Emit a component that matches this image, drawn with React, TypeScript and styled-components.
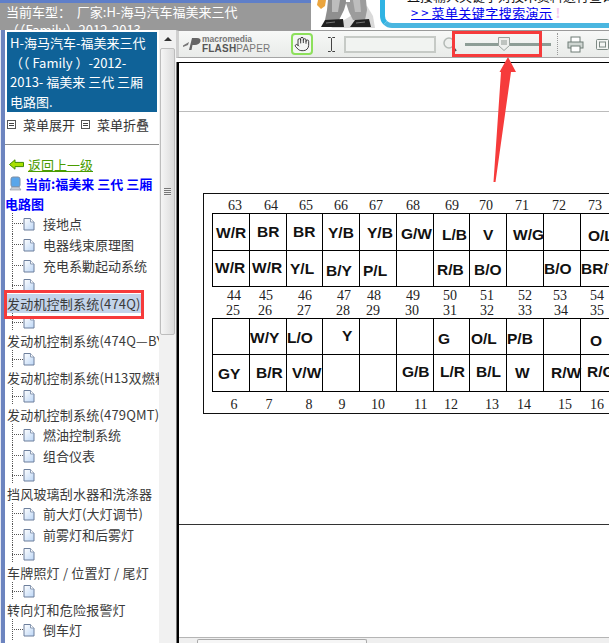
import React from 'react';
import styled, { createGlobalStyle } from 'styled-components';
import { Hand } from 'lucide-react';

const GlobalStyle = createGlobalStyle`
  html, body {
    margin: 0;
    padding: 0;
    background: #fff;
  }
  #root {
    width: 609px;
    height: 643px;
    overflow: hidden;
  }
`;

const cjk = `"Noto Sans CJK SC", "Noto Sans", sans-serif`;

const Page = styled.div`
  position: relative;
  width: 609px;
  height: 643px;
  overflow: hidden;
  display: flex;
  flex-direction: column;
  font-family: ${cjk};
  font-size: 13px;
`;

/* top strip */
const TopBar = styled.div`
  flex: 0 0 30px;
  display: flex;
  overflow: hidden;
`;

const CarTitle = styled.div`
  flex: 0 0 311px;
  box-sizing: border-box;
  padding: 3px 0 0 6px;
  background: linear-gradient(to bottom, #5f7fc9 0 3px, #999 3px);
  color: #fff;
  line-height: 18px;
  white-space: pre;
  overflow: hidden;
`;

const Mascot = styled.svg`
  flex: 0 0 69px;
  height: 30px;
  background: #fff;
`;

const Banner = styled.div`
  flex: 1;
  height: 28px;
  box-sizing: border-box;
  border: 5px solid #2fb3e3;
  border-top: 0;
  border-right: 0;
  border-bottom-color: #4ab6e0;
  border-bottom-left-radius: 12px;
  background: #fff;
  padding-left: 26px;
  overflow: hidden;
  white-space: nowrap;
`;

const BannerClip = styled.div`
  height: 3px;
  margin-left: -4px;
  overflow: hidden;
  font-size: 13px;
  color: #111;
  span {
    display: block;
    margin-top: -10px;
    line-height: 12px;
  }
`;

const BannerLink = styled.a`
  display: inline-block;
  line-height: 18px;
  font-size: 13px;
  letter-spacing: 0.45px;
  color: #0000ee;
  text-decoration: underline;
  span {
    letter-spacing: 3px;
  }
`;

const Bang = styled.span`
  margin-left: 3px;
  color: #f6c8ef;
  font-weight: 700;
`;

const Body = styled.div`
  flex: 1;
  display: flex;
  min-height: 0;
`;

/* left menu */
const Sidebar = styled.aside`
  flex: 0 0 158px;
  margin-left: 1px;
  box-sizing: border-box;
  border-left: 4px solid #6c84bf;
  box-shadow: -1px 0 #e3e7f3;
  overflow: hidden;
  background: #fff;
`;

const TitleBox = styled.div`
  margin: 2px 2px 0 2px;
  height: 80px;
  box-sizing: border-box;
  padding: 1px 0 0 3px;
  background: #0f6298;
  color: #fff;
  line-height: 19.5px;
  white-space: pre;
`;

const ExpandRow = styled.div`
  display: flex;
  align-items: center;
  height: 33px;
  box-sizing: border-box;
  padding: 0 0 8px 2px;
  color: #333;
  border-bottom: 1px solid #8e8e8e;
`;

const BoxIcon = styled.span`
  width: 9px;
  height: 9px;
  box-sizing: border-box;
  border: 1px solid #555;
  margin-right: 7px;
  background: repeating-linear-gradient(to bottom, #fff 0 1px, #444 1px 2px) center / 5px 5px no-repeat;
`;

const ExpandLabel = styled.span`
  margin-right: 6px;
`;

const BackLink = styled.a`
  display: flex;
  align-items: center;
  margin: 9px 0 0 4px;
  height: 20px;
  color: #4a9c00;
  span {
    text-decoration: underline;
    margin-left: 4px;
  }
`;

const Current = styled.div`
  color: #0000ff;
  font-weight: 700;
  line-height: 20px;
  svg {
    margin: 0 3px 0 4px;
    vertical-align: -2px;
  }
`;

const Tree = styled.div`
  margin-top: -1px;
`;

const LeafRow = styled.div<{ $h: number }>`
  display: flex;
  align-items: center;
  height: ${(p) => p.$h}px;
  padding-left: 7px;
  color: #3a3a3a;
  white-space: nowrap;
`;

const Connector = styled.span`
  flex: 0 0 11px;
  align-self: stretch;
  background:
    repeating-linear-gradient(to bottom, #555 0 1px, transparent 1px 2px) left top / 1px 100% no-repeat,
    repeating-linear-gradient(to right, #555 0 1px, transparent 1px 2px) left center / 100% 1px no-repeat;
`;

const LeafText = styled.span`
  margin-left: 8px;
`;

const Heading = styled.div<{ $selected?: boolean }>`
  height: 19px;
  line-height: 19px;
  margin-left: 2px;
  color: #3a3a3a;
  letter-spacing: 0.2px;
  white-space: nowrap;
  width: fit-content;
  background: ${(p) => (p.$selected ? '#c3d4ea' : 'transparent')};
`;

/* scrollbar next to the menu */
const ScrollTrack = styled.div`
  flex: 0 0 17px;
  display: flex;
  flex-direction: column;
  align-items: center;
  background: #f1f1f1;
`;

const ArrowUp = styled.span`
  height: 18px;
  display: flex;
  align-items: center;
  &::before {
    content: '';
    border: 4px solid transparent;
    border-top: 0;
    border-bottom: 4px solid #333;
  }
`;

const Thumb = styled.div`
  width: 15px;
  height: 287px;
  box-sizing: border-box;
  border: 1px solid #bdbdbd;
  border-radius: 2px;
  background: linear-gradient(to right, #f5f5f5, #dcdcdc);
  display: flex;
  align-items: center;
  justify-content: center;
`;

const Grip = styled.span`
  width: 7px;
  height: 8px;
  background: repeating-linear-gradient(to bottom, #777 0 1px, #eee 1px 2px);
`;

/* flash paper pane */
const Viewer = styled.main`
  flex: 1;
  min-width: 0;
  display: flex;
  flex-direction: column;
`;

const Toolbar = styled.div`
  flex: 0 0 28px;
  box-sizing: border-box;
  display: flex;
  align-items: center;
  border-top: 1px solid #9a9a9a;
  border-bottom: 1px solid #a5a5a5;
  border-left: 3px solid #d0d0d0;
  background: linear-gradient(to bottom, #f7f8f7, #e9ebe9);
  padding-left: 4px;
  overflow: hidden;
`;

const Logo = styled.div`
  flex: 0 0 84px;
  display: flex;
  align-items: center;
  color: #666;
  font-family: "Liberation Sans", Arial, sans-serif;
`;

const LogoText = styled.div`
  margin-left: 1px;
  line-height: 9px;
`;

const LogoTop = styled.div`
  font-size: 8.5px;
  font-weight: 700;
  color: #777;
`;

const LogoBottom = styled.div`
  font-size: 10px;
  color: #777;
  letter-spacing: 0.2px;
  b {
    color: #555;
  }
`;

const HandButton = styled.button`
  margin-left: 20px;
  width: 22px;
  height: 22px;
  padding: 0;
  display: flex;
  align-items: center;
  justify-content: center;
  border: 2px solid #8de05c;
  border-radius: 4px;
  background: #f4f6f4;
  color: #333;
`;

const Cursor = styled.svg`
  margin-left: 15px;
`;

const SearchInput = styled.div`
  margin-left: 9px;
  width: 92px;
  height: 17px;
  box-sizing: border-box;
  border: 2px solid #c6cac6;
  background: #f1f3f1;
`;

const Lens = styled.svg`
  margin-left: 7px;
`;

const Slider = styled.div`
  margin-left: 8px;
  width: 86px;
  height: 3px;
  background: #8d9d96;
  display: flex;
  align-items: center;
  padding-left: 33px;
  box-sizing: border-box;
`;

const Sep = styled.span`
  margin-left: 6px;
  height: 22px;
  border-left: 1px dotted #999;
`;

const PrintIcon = styled.svg`
  flex: none;
  margin-left: 9px;
`;

const PageModeIcon = styled.svg`
  flex: none;
  margin-left: 12px;
`;

const Paper = styled.div`
  flex: 1;
  min-height: 0;
  margin: 4px 0 0 1px;
  border-top: 1px solid #000;
  border-left: 2px solid #000;
  box-shadow: -1px 0 #777;
  background: #fff;
  display: flex;
  flex-direction: column;
  overflow: hidden;
`;

const Rule = styled.div<{ $top: number; $color: string }>`
  flex: none;
  margin-top: ${(p) => p.$top}px;
  height: 1px;
  background: ${(p) => p.$color};
`;

const Diagram = styled.div`
  flex: none;
  margin: 81px 0 0 24px;
  width: 440px;
  height: 221px;
  box-sizing: border-box;
  border: 1px solid #111;
  padding-left: 8px;
  font-family: "Liberation Sans", Arial, sans-serif;
`;

const NumRow = styled.div<{ $h: number }>`
  display: grid;
  grid-template-columns: repeat(11, 36.75px);
  height: ${(p) => p.$h}px;
  align-items: end;
  font-family: "Liberation Serif", "Times New Roman", serif;
  font-size: 14px;
  line-height: 15px;
  color: #222;
`;

const Num = styled.span<{ $pad: number }>`
  padding-left: ${(p) => p.$pad}px;
  white-space: nowrap;
`;

const PinTable = styled.div`
  display: grid;
  grid-template-columns: repeat(11, 36.75px);
  border-top: 1px solid #000;
  border-left: 1px solid #000;
  width: fit-content;
`;

const Pin = styled.div<{ $h: number; $px: number; $py: number }>`
  height: ${(p) => p.$h}px;
  box-sizing: border-box;
  border-right: 1px solid #000;
  border-bottom: 1px solid #000;
  padding: ${(p) => p.$py}px 0 0 ${(p) => p.$px}px;
  font-size: 15.5px;
  font-weight: 700;
  line-height: 18px;
  color: #111;
  white-space: nowrap;
`;

const HScroll = styled.div`
  margin-top: auto;
  flex: 0 0 4px;
  box-sizing: border-box;
  border-top: 1px solid #b5b5b5;
  background: #efefef;
  padding: 1px 0 0 18px;
`;

const HThumb = styled.div`
  width: 168px;
  height: 3px;
  border: 1px solid #aaa;
  border-bottom: 0;
  border-radius: 2px 2px 0 0;
  background: #f6f6f6;
`;

/* red marks drawn over the screenshot */
const MarkBox = styled.div`
  position: absolute;
  box-sizing: border-box;
  left: 452px;
  top: 31px;
  width: 90px;
  height: 26px;
  border: 3px solid #f63b3b;
`;

const RowMark = styled.div`
  position: absolute;
  box-sizing: border-box;
  left: 4px;
  top: 290px;
  width: 140px;
  height: 29px;
  border: 3px solid #f63b3b;
`;

const MarkArrow = styled.svg`
  position: absolute;
  left: 488px;
  top: 56px;
`;

const PageIcon = () => (
  <svg width="12" height="14" viewBox="0 0 12 14">
    <defs>
      <linearGradient id="pg" x1="0" y1="0" x2="1" y2="1">
        <stop offset="0" stopColor="#ffffff" />
        <stop offset="1" stopColor="#bcd6f6" />
      </linearGradient>
    </defs>
    <path d="M1 1.5h6.5L11 5v8H1z" fill="url(#pg)" stroke="#6d7f9c" />
    <path d="M7.5 1.5V5H11" fill="#fff" stroke="#8a9ab3" />
  </svg>
);

const Leaf = ({ text, h = 21 }: { text?: string; h?: number }) => (
  <LeafRow $h={h}>
    <Connector />
    <PageIcon />
    {text && <LeafText>{text}</LeafText>}
  </LeafRow>
);

const COL = 36.75;
const LEFT = 212;

type PinLabel = [string, number, number] | null;

const numbers: Array<{ h: number; items: Array<[string, number]> }> = [
  { h: 19, items: [['63', 235], ['64', 271], ['65', 306], ['66', 341], ['67', 376], ['68', 413], ['69', 452], ['70', 486], ['71', 522], ['72', 559], ['73', 595]] },
  { h: 16, items: [['44', 234], ['45', 266], ['46', 305], ['47', 344], ['48', 374], ['49', 413], ['50', 450], ['51', 487], ['52', 525], ['53', 560], ['54', 597]] },
  { h: 15, items: [['25', 233], ['26', 265], ['27', 304], ['28', 343], ['29', 373], ['30', 412], ['31', 450], ['32', 487], ['33', 525], ['34', 561], ['35', 597]] },
  { h: 20, items: [['6', 234], ['7', 269], ['8', 309], ['9', 342], ['10', 378], ['11', 421], ['12', 451], ['13', 492], ['14', 524], ['15', 565], ['16', 597]] },
];

const upperTop = 214;
const lowerTop = 318;

const upperPins: PinLabel[][] = [
  [['W/R', 216, 233], ['BR', 257, 232], ['BR', 293, 232], ['Y/B', 328, 233], ['Y/B', 367, 233], ['G/W', 401, 234], ['L/B', 442, 235], ['V', 483, 235], ['W/G', 513, 235], null, ['O/L', 588, 236]],
  [['W/R', 215, 268], ['W/R', 252, 268], ['Y/L', 290, 269], ['B/Y', 326, 271], ['P/L', 363, 271], null, ['R/B', 437, 270], ['B/O', 474, 270], null, ['B/O', 544, 269], ['BR/Y', 581, 269]],
];

const lowerPins: PinLabel[][] = [
  [null, ['W/Y', 250, 337], ['L/O', 287, 337], ['Y', 342, 335], null, null, ['G', 438, 338], ['O/L', 471, 338], ['P/B', 507, 338], null, ['O', 590, 340]],
  [['GY', 218, 373], ['B/R', 256, 372], ['V/W', 292, 372], null, null, ['G/B', 402, 371], ['L/R', 440, 371], ['B/L', 476, 371], ['W', 515, 372], ['R/W', 551, 372], ['R/G', 587, 371]],
];

const NumberLine = ({ row }: { row: (typeof numbers)[number] }) => (
  <NumRow $h={row.h}>
    {row.items.map(([label, cx], i) => (
      <Num key={label} $pad={Math.max(0, cx - (label.length * 7) / 2 - (LEFT + COL * i))}>
        {label}
      </Num>
    ))}
  </NumRow>
);

const Pins = ({ rows, top, heights }: { rows: PinLabel[][]; top: number; heights: number[] }) => (
  <PinTable>
    {rows.map((row, r) => {
      const rowTop = top + heights.slice(0, r).reduce((a, b) => a + b, 0);
      return row.map((pin, i) => (
        <Pin
          key={`${r}-${i}`}
          $h={heights[r]}
          $px={pin ? Math.max(0, pin[1] - (LEFT + 1 + COL * i)) : 0}
          $py={pin ? Math.max(0, pin[2] - 9 - rowTop) : 0}
        >
          {pin ? pin[0] : ''}
        </Pin>
      ));
    })}
  </PinTable>
);

export default function App() {
  return (
    <Page>
      <GlobalStyle />
      <TopBar>
        <CarTitle>{'当前车型：  厂家:H-海马汽车福美来三代\n（（Family）2012-2013'}</CarTitle>
        <Mascot viewBox="0 0 69 30">
          <path d="M56 6l6 10 2 12H20z" fill="#d9d9d9" />
          <path d="M7 0h8l-1 6-4 3-4-4z" fill="#eba53e" />
          <path d="M17 0h19l-3 10-5 10H14l2-10z" fill="#8f8f8f" />
          <path d="M34 0h21l1 10-2 10H42l-4-8z" fill="#9c9c9c" />
          <path d="M21 0h8l-2 12h-6zM42 0h7l1 12h-6z" fill="#bdbdbd" />
          <path d="M35 0h4v2h-4z" fill="#fff" />
          <path d="M10 27l4-7 18-1 1 8z" fill="#222" />
          <path d="M39 27l5-7 14-1 2 8z" fill="#222" />
          <path d="M15 23l9-1M45 23l9-1" stroke="#777" fill="none" />
        </Mascot>
        <Banner>
          <BannerClip>
            <span>直接输入关键字对技术资料进行查询搜索</span>
          </BannerClip>
          <BannerLink>
            <span>&gt;&gt;</span>菜单关键字搜索演示
          </BannerLink>
          <Bang>!</Bang>
        </Banner>
      </TopBar>
      <Body>
        <Sidebar>
          <TitleBox>{'H-海马汽车-福美来三代\n（（ Family ）-2012-\n2013- 福美来 三代 三厢\n电路图.'}</TitleBox>
          <ExpandRow>
            <BoxIcon />
            <ExpandLabel>菜单展开</ExpandLabel>
            <BoxIcon />
            <ExpandLabel>菜单折叠</ExpandLabel>
          </ExpandRow>
          <BackLink>
            <svg width="15" height="11" viewBox="0 0 15 11">
              <path d="M.5 5.5 6 .8v2.6h8.5v4.2H6v2.6z" fill="#a8e000" stroke="#3f8a00" />
            </svg>
            <span>返回上一级</span>
          </BackLink>
          <Current>
            <svg width="13" height="15" viewBox="0 0 13 15">
              <rect x="2" y="1" width="9" height="10" rx="2" fill="#5aa6ea" stroke="#7c8ea5" />
              <path d="M3 11h7l2 3H1z" fill="#c9ced6" stroke="#8a8f98" strokeWidth=".6" />
            </svg>
            当前:福美来 三代 三厢 电路图
          </Current>
          <Tree>
            <Leaf text="接地点" />
            <Leaf text="电器线束原理图" />
            <Leaf text="充电系勦起动系统" />
            <Leaf h={18} />
            <Heading $selected>发动机控制系统(474Q)</Heading>
            <Leaf h={18} />
            <Heading>发动机控制系统(474Q—BYZ)</Heading>
            <Leaf h={18} />
            <Heading>发动机控制系统(H13双燃料)</Heading>
            <Leaf h={18} />
            <Heading>发动机控制系统(479QMT)</Heading>
            <Leaf text="燃油控制系统" />
            <Leaf text="组合仪表" />
            <Leaf h={18} />
            <Heading>挡风玻璃刮水器和洗涤器</Heading>
            <Leaf text="前大灯(大灯调节)" />
            <Leaf text="前雾灯和后雾灯" />
            <Leaf h={18} />
            <Heading>车牌照灯 / 位置灯 / 尾灯</Heading>
            <Leaf h={18} />
            <Heading>转向灯和危险报警灯</Heading>
            <Leaf text="倒车灯" />
          </Tree>
        </Sidebar>
        <ScrollTrack>
          <ArrowUp />
          <Thumb>
            <Grip />
          </Thumb>
        </ScrollTrack>
        <Viewer>
          <Toolbar>
            <Logo>
              <svg width="18" height="14" viewBox="0 0 18 14">
                <path d="M0 8.5 6 5l-1 3-5 2z" fill="#777" />
                <path d="M6 13 9 1h5c3 0 4 1.5 3.4 3.5S14.500 8 12 8H9.500L8.500 13z" fill="#666" />
              </svg>
              <LogoText>
                <LogoTop>macromedia</LogoTop>
                <LogoBottom>
                  <b>FLASH</b>PAPER
                </LogoBottom>
              </LogoText>
            </Logo>
            <HandButton>
              <Hand size={16} strokeWidth={1.4} />
            </HandButton>
            <Cursor width="7" height="15" viewBox="0 0 7 15">
              <path d="M0 .5h2.500L3.500 1.500 4.500.5H7M3.500 1.500v12M0 14.500h2.500l1-1 1 1H7" fill="none" stroke="#444" />
            </Cursor>
            <SearchInput />
            <Lens width="14" height="15" viewBox="0 0 14 15">
              <circle cx="6" cy="6" r="5" fill="#eef0ee" stroke="#b4bab6" strokeWidth="1.500" />
              <path d="M10 10l3 4" stroke="#555" strokeWidth="2" />
            </Lens>
            <Slider>
              <svg width="12" height="14" viewBox="0 0 12 14">
                <path d="M.5.5h11v8L6 13.500.5 8.500z" fill="#eef0ee" stroke="#9aa39e" />
                <path d="M4 3v5M6 3v5M8 3v5" stroke="#8d9690" />
              </svg>
            </Slider>
            <Sep />
            <PrintIcon width="17" height="17" viewBox="0 0 17 17">
              <rect x="4" y="1" width="9" height="6" fill="#fff" stroke="#6f7c76" />
              <rect x="1" y="6" width="15" height="6" fill="#cfd6d2" stroke="#6f7c76" />
              <rect x="4" y="10" width="9" height="6" fill="#fff" stroke="#6f7c76" />
            </PrintIcon>
            <PageModeIcon width="13" height="11" viewBox="0 0 13 11">
              <rect x=".5" y=".5" width="12" height="10" rx="1" fill="#f3f5f3" stroke="#7d8a84" />
              <rect x="3.500" y="3" width="6" height="5" fill="none" stroke="#7d8a84" />
            </PageModeIcon>
          </Toolbar>
          <Paper>
            <Rule $top={48} $color="#bcbcbc" />
            <Diagram>
              <NumberLine row={numbers[0]} />
              <Pins rows={upperPins} top={upperTop} heights={[37, 36]} />
              <NumberLine row={numbers[1]} />
              <NumberLine row={numbers[2]} />
              <Pins rows={lowerPins} top={lowerTop} heights={[36, 37]} />
              <NumberLine row={numbers[3]} />
            </Diagram>
            <Rule $top={110} $color="#333" />
            <HScroll>
              <HThumb />
            </HScroll>
          </Paper>
        </Viewer>
      </Body>
      <RowMark />
      <MarkBox />
      <MarkArrow width="32" height="128" viewBox="0 0 32 128">
        <path d="M20 1 28 16H23L7.500 126 5.500 126 13 16H11.500z" fill="#f63b3b" />
      </MarkArrow>
    </Page>
  );
}
